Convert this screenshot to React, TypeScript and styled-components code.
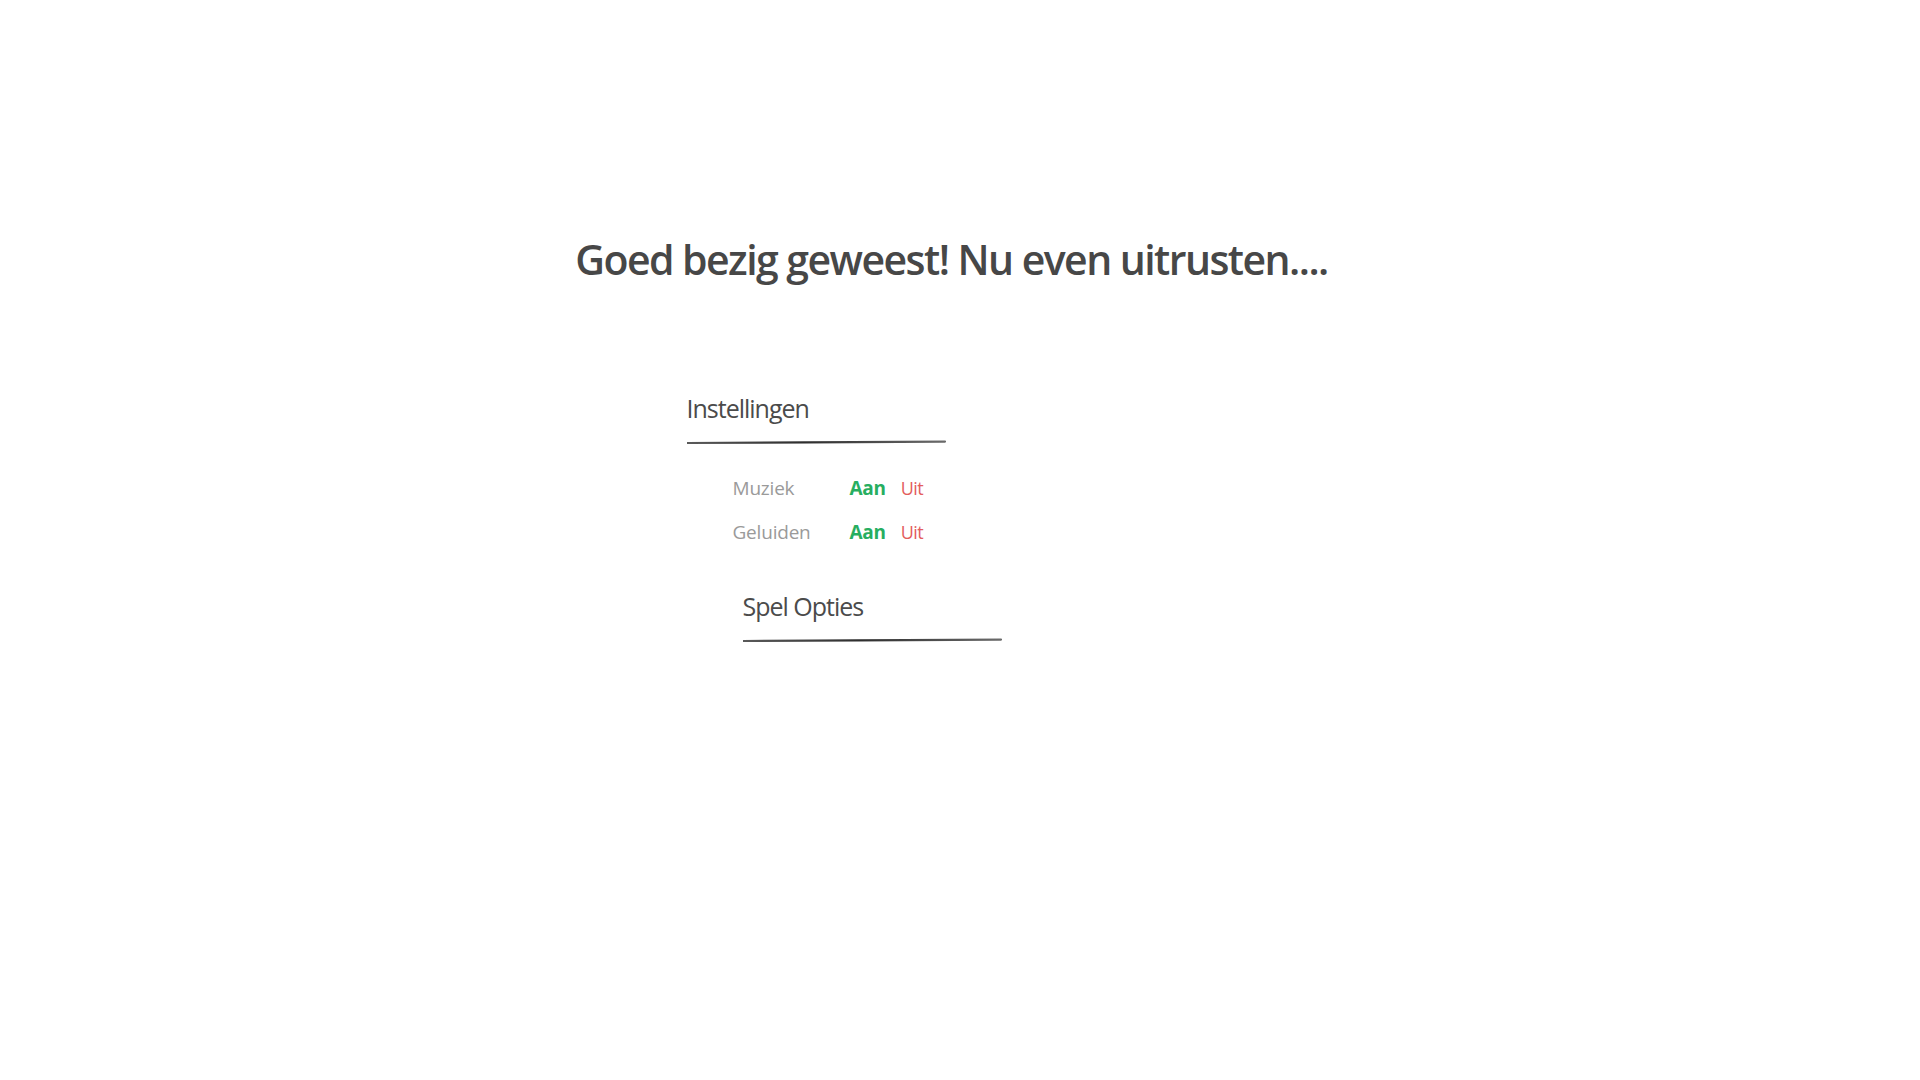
import React from "react";
import styled, { createGlobalStyle } from "styled-components";

const Global = createGlobalStyle`
  html, body { margin: 0; padding: 0; background: #ffffff; }
  body { font-family: "Open Sans", "Noto Sans", Arial, sans-serif; }
`;

const Page = styled.main`
  width: 1903px;
  min-height: 1080px;
  padding-top: 239px;
  box-sizing: border-box;
  display: flex;
  flex-direction: column;
  align-items: center;
`;

const Title = styled.h1`
  margin: 0;
  font-size: 41px;
  line-height: 41px;
  font-weight: 600;
  color: #474747;
  letter-spacing: -1.55px;
  text-align: center;
`;

const Column = styled.div`
  width: 530px;
  margin-top: 116px;
  display: flex;
  flex-direction: column;
`;

const Section = styled.section<{ $indent?: number }>`
  display: flex;
  flex-direction: column;
  padding-left: ${(p) => p.$indent ?? 0}px;
`;

const Heading = styled.h2`
  margin: 0;
  font-size: 25px;
  line-height: 25px;
  font-weight: 400;
  color: #4b4b4b;
  letter-spacing: -1px;
`;

const UnderlineSvg = styled.svg`
  display: block;
  margin-top: 18px;
`;

const Rows = styled.div`
  display: flex;
  flex-direction: column;
  margin-top: 21px;
  padding-left: 46px;
`;

const Row = styled.div`
  display: flex;
  align-items: baseline;
  height: 44px;
  line-height: 44px;
  font-size: 19px;
`;

const Label = styled.span`
  width: 117px;
  color: #9a9a9a;
  letter-spacing: -0.2px;
`;

const Toggle = styled.span<{ $on?: boolean }>`
  color: ${(p) => (p.$on ? "#27ae60" : "#e35d5d")};
  font-weight: ${(p) => (p.$on ? 700 : 400)};
  font-size: ${(p) => (p.$on ? "19px" : "18px")};
  margin-right: ${(p) => (p.$on ? "15px" : "0")};
  letter-spacing: ${(p) => (p.$on ? "-0.3px" : "-0.6px")};
  cursor: pointer;
`;

const SecondSection = styled(Section)`
  margin-top: 40px;
`;

function Underline() {
  return (
    <UnderlineSvg width="260" height="6" viewBox="0 0 260 6">
      <defs>
        <linearGradient id="ul" x1="0" x2="1" y1="0" y2="0">
          <stop offset="0" stopColor="#5a5a5a" />
          <stop offset="0.45" stopColor="#2e2e2e" />
          <stop offset="1" stopColor="#6a6a6a" />
        </linearGradient>
      </defs>
      <path d="M0.5 4 Q129 3.6 258 2.6" stroke="url(#ul)" strokeWidth="2.2" fill="none" strokeLinecap="round" />
    </UnderlineSvg>
  );
}

const settings = ["Muziek", "Geluiden"];

export default function App() {
  return (
    <>
      <Global />
      <Page>
        <Title>Goed bezig geweest! Nu even uitrusten....</Title>
        <Column>
          <Section>
            <Heading>Instellingen</Heading>
            <Underline />
            <Rows>
              {settings.map((s) => (
                <Row key={s}>
                  <Label>{s}</Label>
                  <Toggle $on>Aan</Toggle>
                  <Toggle>Uit</Toggle>
                </Row>
              ))}
            </Rows>
          </Section>
          <SecondSection $indent={56}>
            <Heading>Spel Opties</Heading>
            <Underline />
          </SecondSection>
        </Column>
      </Page>
    </>
  );
}
